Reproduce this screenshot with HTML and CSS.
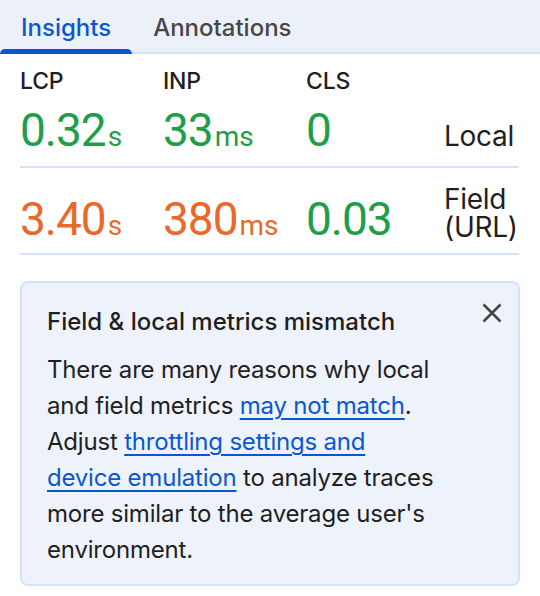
FILE: index.html
```html
<!DOCTYPE html>
<html>
<head>
<meta charset="utf-8">
<link rel="stylesheet" href="styles.css">
</head>
<body>
<div class="tabs">
  <div class="tab active">Insights</div>
  <div class="tab">Annotations</div>
</div>
<div class="metrics">
  <div class="label">LCP</div>
  <div class="label">INP</div>
  <div class="label">CLS</div>
  <div></div>

  <div class="value row1 good">0.32<span class="unit">s</span></div>
  <div class="value row1 good">33<span class="unit">ms</span></div>
  <div class="value row1 good">0</div>
  <div class="rowname rn1">Local</div>

  <div class="divider"></div>

  <div class="value row2 warn">3.40<span class="unit">s</span></div>
  <div class="value row2 warn">380<span class="unit">ms</span></div>
  <div class="value row2 good">0.03</div>
  <div class="rowname rn2">Field<br>(URL)</div>

  <div class="divider"></div>
</div>
<div class="card">
  <div class="card-body">
    <div class="card-title">Field &amp; local metrics mismatch</div>
    <p class="card-text">There are many reasons why local and field metrics <a href="#">may not match</a>. Adjust <a href="#">throttling settings and device emulation</a> to analyze traces more similar to the average user's environment.</p>
  </div>
  <button class="close" aria-label="Close">
    <svg width="20" height="20" viewBox="0 0 20 20"><path d="M1.5 1.5 L18.5 18.5 M18.5 1.5 L1.5 18.5" stroke="#474747" stroke-width="2.6" stroke-linecap="butt" fill="none"/></svg>
  </button>
</div>
</body>
</html>
```
FILE: styles.css
```css
* { box-sizing: border-box; }
body {
  margin: 0;
  background: #ffffff;
  font-family: Inter, "Noto Sans", sans-serif;
  color: #1f1f1f;
}
.tabs {
  display: flex;
  height: 54px;
  background: #ebf0f9;
  border-bottom: 2px solid #d3e3fd;
}
.tab {
  position: relative;
  padding: 14px 21px 0 21px;
  font-size: 24px;
  font-weight: 500;
  line-height: 28px;
  color: #474747;
}
.tab.active { color: #0b57d0; }
.tab.active::after {
  content: "";
  position: absolute;
  left: 0;
  right: 0;
  bottom: -2px;
  height: 5px;
  border-radius: 5px 5px 0 0;
  background: #0b57d0;
}
.metrics {
  display: grid;
  grid-template-columns: 143px 143px 138px 75px;
  margin: 0 21px 0 20px;
  padding-top: 13px;
}
.label {
  font-size: 23px;
  font-weight: 500;
  line-height: 28px;
  letter-spacing: -0.2px;
  color: #1f1f1f;
}
.value {
  font-family: Roboto, sans-serif;
  font-size: 46px;
  line-height: 52px;
  letter-spacing: -1px;
  white-space: nowrap;
}
.row1 { padding: 9px 0 10px; }
.row2 { padding: 25px 0 8px; }
.unit {
  font-size: 28px;
  line-height: 1;
  letter-spacing: 0;
  margin-left: 2px;
}
.good { color: #1e9e48; }
.warn { color: #e8692a; }
.rowname {
  font-size: 28px;
  line-height: 28px;
  letter-spacing: -0.3px;
  align-self: end;
  color: #1f1f1f;
}
.rn1 { padding-bottom: 16px; }
.rn2 { padding-bottom: 12px; }
.divider {
  grid-column: 1 / -1;
  height: 2px;
  background: #d3e3fd;
}
.card {
  display: flex;
  align-items: flex-start;
  margin: 26px 20px 0;
  padding: 20px 16px 16px 25px;
  background: #eef3fb;
  border: 2px solid #d3e3fd;
  border-radius: 8px;
}
.card-body { width: 398px; flex: none; }
.card-title {
  font-size: 24px;
  font-weight: 500;
  line-height: 28px;
  margin-top: 5px;
}
.card-text {
  margin: 16px 0 0;
  font-size: 24px;
  line-height: 36px;
  letter-spacing: -0.2px;
}
.card-text a {
  color: #0b57d0;
  text-decoration: underline;
  text-decoration-thickness: 2px;
  text-underline-offset: 4px;
}
.close {
  margin-left: auto;
  border: 0;
  background: none;
  padding: 0;
  width: 20px;
  height: 20px;
  display: block;
}
.close svg { display: block; }
```
